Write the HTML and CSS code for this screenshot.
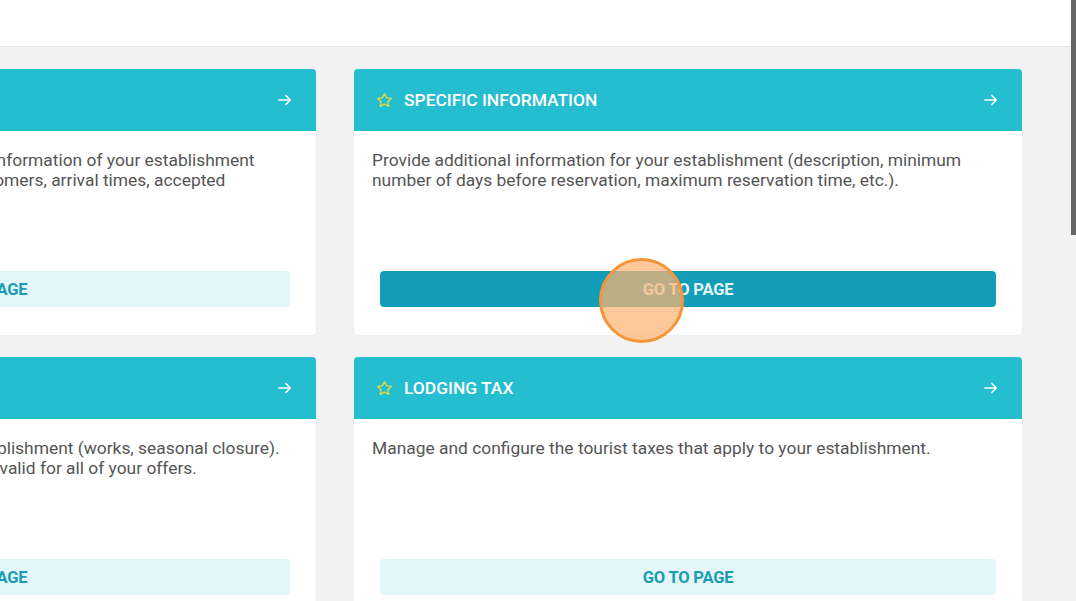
FILE: index.html
```html
<!DOCTYPE html>
<html lang="en">
<head>
  <meta charset="UTF-8">
  <meta name="viewport" content="width=device-width, initial-scale=1.0">
  <title>Establishment settings</title>
  <link rel="stylesheet" href="styles.css">
</head>
<body>
  <header class="topbar"></header>
  <main class="content">
    <div class="cards">
      <section class="card">
        <div class="card-head">
          <span class="card-title">
            <svg class="star" viewBox="0 0 24 24"><path d="M12 3.2l2.6 5.5 6 .7-4.4 4.1 1.2 5.9L12 16.5l-5.4 2.9 1.2-5.9-4.4-4.1 6-.7z"/></svg>
            GENERAL INFORMATION
          </span>
          <svg class="arrow" viewBox="0 0 24 24"><path d="M4 12h15M13 6l6 6-6 6"/></svg>
        </div>
        <div class="card-body">
          <p>Complete and keep up-to-date the general information of your establishment (address, contact details, reception of customers, arrival times, accepted currencies, payment methods, etc.).</p>
          <button class="go">Go to page</button>
        </div>
      </section>

      <section class="card">
        <div class="card-head">
          <span class="card-title">
            <svg class="star" viewBox="0 0 24 24"><path d="M12 3.2l2.6 5.5 6 .7-4.4 4.1 1.2 5.9L12 16.5l-5.4 2.9 1.2-5.9-4.4-4.1 6-.7z"/></svg>
            SPECIFIC INFORMATION
          </span>
          <svg class="arrow" viewBox="0 0 24 24"><path d="M4 12h15M13 6l6 6-6 6"/></svg>
        </div>
        <div class="card-body">
          <p>Provide additional information for your establishment (description, minimum number of days before reservation, maximum reservation time, etc.).</p>
          <button class="go hover">Go to page</button>
        </div>
      </section>

      <section class="card">
        <div class="card-head">
          <span class="card-title">
            <svg class="star" viewBox="0 0 24 24"><path d="M12 3.2l2.6 5.5 6 .7-4.4 4.1 1.2 5.9L12 16.5l-5.4 2.9 1.2-5.9-4.4-4.1 6-.7z"/></svg>
            CLOSING PERIODS
          </span>
          <svg class="arrow" viewBox="0 0 24 24"><path d="M4 12h15M13 6l6 6-6 6"/></svg>
        </div>
        <div class="card-body">
          <p>Indicate all the closing periods of your establishment (works, seasonal closure). These closing periods are all automatically valid for all of your offers.</p>
          <button class="go">Go to page</button>
        </div>
      </section>

      <section class="card">
        <div class="card-head">
          <span class="card-title">
            <svg class="star" viewBox="0 0 24 24"><path d="M12 3.2l2.6 5.5 6 .7-4.4 4.1 1.2 5.9L12 16.5l-5.4 2.9 1.2-5.9-4.4-4.1 6-.7z"/></svg>
            LODGING TAX
          </span>
          <svg class="arrow" viewBox="0 0 24 24"><path d="M4 12h15M13 6l6 6-6 6"/></svg>
        </div>
        <div class="card-body">
          <p>Manage and configure the tourist taxes that apply to your establishment.</p>
          <button class="go">Go to page</button>
        </div>
      </section>
    </div>
  </main>

  <!-- click marker over the hovered button -->
  <div class="click-dot"></div>
  <div class="scroll-thumb"></div>
</body>
</html>
```

FILE: styles.css
```css
html, body {
  margin: 0;
  height: 100%;
  overflow: hidden;
}
body {
  font-family: Roboto, "Liberation Sans", Arial, sans-serif;
  background: #f2f2f2;
  color: #555;
}
.topbar {
  height: 46px;
  background: #fff;
  border-bottom: 1px solid #e9e9e9;
}
.content {
  padding: 22px 0 0;
}
.cards {
  display: grid;
  grid-template-columns: 668px 668px;
  column-gap: 38px;
  row-gap: 22px;
  margin-left: -352px;
}
.card {
  background: #fff;
  border-radius: 4px;
  box-shadow: 0 0 2px rgba(0, 0, 0, 0.06);
}
.card-head {
  height: 62px;
  background: #25bdd0;
  border-radius: 4px 4px 0 0;
  display: flex;
  align-items: center;
  justify-content: space-between;
  padding: 0 22px 0 21px;
  color: #fff;
}
.card-title {
  display: flex;
  align-items: center;
  gap: 10px;
  font-size: 17.4px;
  font-weight: 500;
}
.star {
  width: 19px;
  height: 19px;
  fill: none;
  stroke: #e2d94a;
  stroke-width: 1.8;
  stroke-linejoin: round;
}
.arrow {
  width: 18px;
  height: 18px;
  fill: none;
  stroke: #fff;
  stroke-width: 2.2;
  stroke-linecap: round;
  stroke-linejoin: round;
}
.card-body {
  min-height: 204px;
  box-sizing: border-box;
  padding: 19px 18px 28px;
  display: flex;
  flex-direction: column;
}
.card-body p {
  margin: 0;
  font-size: 17.4px;
  line-height: 20px;
  color: #555;
}
.go {
  margin: auto 8px 0;
  height: 36px;
  border: none;
  border-radius: 4px;
  background: #e3f6f9;
  color: #1a9db3;
  font-family: Roboto, "Liberation Sans", Arial, sans-serif;
  font-size: 16.5px;
  font-weight: 700;
  text-transform: uppercase;
  letter-spacing: -0.2px;
  cursor: pointer;
}
.go.hover {
  background: #139db8;
  color: #e3f6f9;
}
.click-dot {
  position: fixed;
  left: 599px;
  top: 258px;
  width: 79px;
  height: 79px;
  border-radius: 50%;
  border: 3px solid #f39538;
  background: rgba(252, 180, 116, 0.72);
}
.scroll-thumb {
  position: fixed;
  right: 0;
  top: 0;
  width: 5px;
  height: 235px;
  background: #666;
}
```
